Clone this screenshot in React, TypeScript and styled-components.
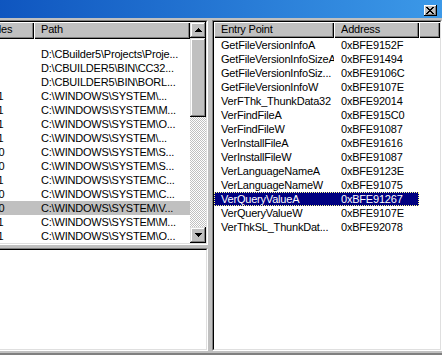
import React from "react";
import styled, { createGlobalStyle } from "styled-components";

const GlobalStyle = createGlobalStyle`
  html, body {
    margin: 0;
    padding: 0;
    background: #c0c0c0;
  }
  body {
    font-family: "Liberation Sans", Arial, sans-serif;
    font-size: 11px;
    color: #000;
  }
`;

const Screen = styled.div`
  width: 442px;
  height: 355px;
  overflow: hidden;
  background: #c0c0c0;
`;

/* the window is wider than the shot, its left part is cut off */
const Window = styled.div`
  margin-left: -37px;
  width: 479px;
  height: 355px;
  box-sizing: border-box;
  display: flex;
  flex-direction: column;
  padding-bottom: 2px;
  border-bottom: 2px solid #808080;
`;

const TitleBar = styled.div`
  height: 18px;
  flex: none;
  display: flex;
  justify-content: flex-end;
  background: linear-gradient(to right, #0b50bc, #3c99e8);
`;

const CloseButton = styled.div`
  width: 13px;
  height: 11px;
  margin: 5px 5px 0 0;
  box-sizing: border-box;
  background: #c0c0c0;
  box-shadow: inset -1px -1px #000, inset 1px 1px #fff, inset -2px -2px #808080;
  display: flex;
  align-items: center;
  justify-content: center;

  svg {
    display: block;
    margin: -1px 0 0 -1px;
  }
`;

const Body = styled.div`
  flex: 1;
  display: flex;
  gap: 4px;
  padding-top: 2px;
  min-height: 0;
`;

const LeftColumn = styled.div`
  width: 245px;
  flex: none;
  display: flex;
  flex-direction: column;
  gap: 3px;
`;

const Field = styled.div<{ $height?: number }>`
  box-sizing: border-box;
  border: 1px solid;
  border-color: #808080 #fff #fff #808080;
  background: #fff;
  ${(p) => (p.$height ? `height: ${p.$height}px; flex: none;` : "flex: 1;")}
  display: flex;
  min-width: 0;
`;

const FieldInner = styled.div`
  flex: 1;
  min-width: 0;
  border: 1px solid;
  border-color: #000 #dfdfdf #dfdfdf #000;
  display: flex;
  overflow: hidden;
`;

const ListArea = styled.div`
  flex: 1;
  min-width: 0;
  overflow: hidden;
  display: flex;
  flex-direction: column;
`;

const Header = styled.div<{ $height: number }>`
  display: flex;
  height: ${(p) => p.$height}px;
  flex: none;
  background: #c0c0c0;
`;

const HeaderCell = styled.div<{ $width?: number }>`
  box-sizing: border-box;
  ${(p) => (p.$width ? `width: ${p.$width}px; flex: none;` : "flex: 1;")}
  padding-left: 7px;
  line-height: 15px;
  letter-spacing: -0.2px;
  white-space: nowrap;
  overflow: hidden;
  background: #c0c0c0;
  box-shadow: inset 1px 1px #fff, inset -1px -1px #000, inset -2px -2px #808080;
`;

const Row = styled.div<{ $sel?: "active" | "inactive" }>`
  display: flex;
  width: max-content;
  height: 14px;
  line-height: 14px;
  white-space: nowrap;
  letter-spacing: -0.2px;
  box-sizing: border-box;
  background: ${(p) =>
    p.$sel === "active" ? "#000080" : p.$sel === "inactive" ? "#c0c0c0" : "transparent"};
  color: ${(p) => (p.$sel === "active" ? "#fff" : "#000")};
  outline: ${(p) => (p.$sel === "active" ? "1px dotted #ffff90" : "none")};
  outline-offset: -1px;
`;

const Cell = styled.div<{ $width: number; $pad?: number }>`
  width: ${(p) => p.$width}px;
  flex: none;
  box-sizing: border-box;
  padding-left: ${(p) => p.$pad ?? 7}px;
  overflow: hidden;
`;

const ScrollBar = styled.div`
  width: 16px;
  flex: none;
  display: flex;
  flex-direction: column;
`;

const ScrollButton = styled.div`
  width: 16px;
  height: 16px;
  flex: none;
  box-sizing: border-box;
  background: #c0c0c0;
  box-shadow: inset -1px -1px #000, inset 1px 1px #dfdfdf, inset -2px -2px #808080,
    inset 2px 2px #fff;
  display: flex;
  align-items: center;
  justify-content: center;

  svg {
    display: block;
  }
`;

const Thumb = styled(ScrollButton)<{ $size: number }>`
  height: ${(p) => p.$size}px;
`;

const Track = styled.div`
  flex: 1;
  background: repeating-conic-gradient(#c0c0c0 0 25%, #fff 0 50%) 0 0 / 2px 2px;
`;

const RightPane = styled.div`
  flex: 1;
  display: flex;
  min-width: 0;
`;

const Arrow = ({ up }: { up?: boolean }) => (
  <svg width="7" height="4" viewBox="0 0 7 4">
    <path d={up ? "M3.5 0 L7 4 L0 4 Z" : "M0 0 L7 0 L3.5 4 Z"} fill="#000" shapeRendering="crispEdges" />
  </svg>
);

const modules = [
  ["", ""],
  ["", "D:\\CBuilder5\\Projects\\Proje..."],
  ["", "D:\\CBUILDER5\\BIN\\CC32..."],
  ["", "D:\\CBUILDER5\\BIN\\BORL..."],
  ["4.10.11", "C:\\WINDOWS\\SYSTEM\\..."],
  ["4.10.11", "C:\\WINDOWS\\SYSTEM\\M..."],
  ["4.10.11", "C:\\WINDOWS\\SYSTEM\\O..."],
  ["4.10.11", "C:\\WINDOWS\\SYSTEM\\..."],
  ["4.10.10", "C:\\WINDOWS\\SYSTEM\\S..."],
  ["4.10.10", "C:\\WINDOWS\\SYSTEM\\S..."],
  ["4.10.11", "C:\\WINDOWS\\SYSTEM\\C..."],
  ["4.10.10", "C:\\WINDOWS\\SYSTEM\\C..."],
  ["4.10.10", "C:\\WINDOWS\\SYSTEM\\V..."],
  ["4.10.11", "C:\\WINDOWS\\SYSTEM\\M..."],
  ["4.10.11", "C:\\WINDOWS\\SYSTEM\\O..."],
];

const exportsList = [
  ["GetFileVersionInfoA", "0xBFE9152F"],
  ["GetFileVersionInfoSizeA", "0xBFE91494"],
  ["GetFileVersionInfoSiz...", "0xBFE9106C"],
  ["GetFileVersionInfoW", "0xBFE9107E"],
  ["VerFThk_ThunkData32", "0xBFE92014"],
  ["VerFindFileA", "0xBFE915C0"],
  ["VerFindFileW", "0xBFE91087"],
  ["VerInstallFileA", "0xBFE91616"],
  ["VerInstallFileW", "0xBFE91087"],
  ["VerLanguageNameA", "0xBFE9123E"],
  ["VerLanguageNameW", "0xBFE91075"],
  ["VerQueryValueA", "0xBFE91267"],
  ["VerQueryValueW", "0xBFE9107E"],
  ["VerThkSL_ThunkDat...", "0xBFE92078"],
];

const App = () => {
  return (
    <Screen>
      <GlobalStyle />
      <Window>
        <TitleBar>
          <CloseButton>
            <svg width="8" height="7" viewBox="0 0 8 7" shapeRendering="crispEdges">
              <path
                d="M0 0h2v1h-2zM6 0h2v1h-2zM1 1h2v1h-2zM5 1h2v1h-2zM2 2h4v1h-4zM3 3h2v1h-2zM2 4h4v1h-4zM1 5h2v1h-2zM5 5h2v1h-2zM0 6h2v1h-2zM6 6h2v1h-2z"
                fill="#000"
              />
            </svg>
          </CloseButton>
        </TitleBar>
        <Body>
          <LeftColumn>
            <Field $height={225}>
              <FieldInner>
                <ListArea>
                  <Header $height={17}>
                    <HeaderCell $width={69}>Modules</HeaderCell>
                    <HeaderCell $width={156}>Path</HeaderCell>
                  </Header>
                  {modules.map(([ver, path], i) => (
                    <Row key={i} $sel={i === 12 ? "inactive" : undefined}>
                      <Cell $width={69} $pad={4}>
                        {ver}
                      </Cell>
                      <Cell $width={156}>{path}</Cell>
                    </Row>
                  ))}
                </ListArea>
                <ScrollBar>
                  <ScrollButton>
                    <Arrow up />
                  </ScrollButton>
                  <Thumb $size={79} />
                  <Track />
                  <ScrollButton>
                    <Arrow />
                  </ScrollButton>
                </ScrollBar>
              </FieldInner>
            </Field>
            <Field>
              <FieldInner />
            </Field>
          </LeftColumn>
          <RightPane>
            <Field>
              <FieldInner>
                <ListArea>
                  <Header $height={16}>
                    <HeaderCell $width={120}>Entry Point</HeaderCell>
                    <HeaderCell $width={85}>Address</HeaderCell>
                    <HeaderCell />
                  </Header>
                  {exportsList.map(([name, addr], i) => (
                    <Row key={name + i} $sel={i === 11 ? "active" : undefined}>
                      <Cell $width={120}>{name}</Cell>
                      <Cell $width={85}>{addr}</Cell>
                    </Row>
                  ))}
                </ListArea>
              </FieldInner>
            </Field>
          </RightPane>
        </Body>
      </Window>
    </Screen>
  );
};

export default App;
